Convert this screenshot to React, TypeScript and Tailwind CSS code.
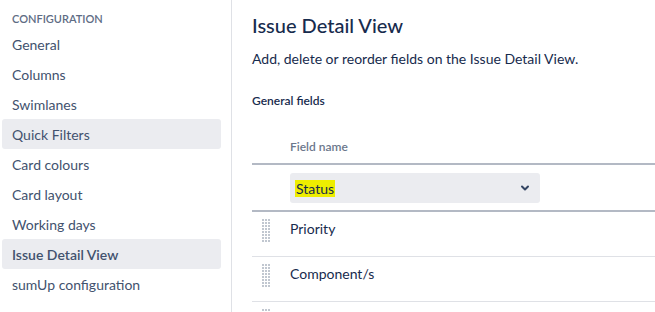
import React from 'react'

const navItems = [
  'General',
  'Columns',
  'Swimlanes',
  'Quick Filters',
  'Card colours',
  'Card layout',
  'Working days',
  'Issue Detail View',
  'sumUp configuration',
]

function DragHandle() {
  const dots = []
  for (let r = 0; r < 8; r++) {
    for (let c = 0; c < 3; c++) {
      dots.push(<rect key={`${r}-${c}`} x={c * 3} y={r * 3} width={2} height={2} fill="#c1c7d0" />)
    }
  }
  return (
    <svg width="8" height="23" viewBox="0 0 8 23" className="shrink-0">
      {dots}
    </svg>
  )
}

function FieldRow({ name }: { name?: string }) {
  return (
    <div className="flex h-[45px] border-b border-[#dfe1e6]">
      <div className="w-[38px] flex pl-[10px] pt-[7px]">
        <DragHandle />
      </div>
      {name && <div className="flex-1 pt-[6px] text-[14px] text-[#172b4d]">{name}</div>}
    </div>
  )
}

export default function App() {
  return (
    <div className="flex w-[655px] h-[312px] overflow-hidden bg-white" style={{ fontFamily: '"Segoe UI", Lato, "Noto Sans", sans-serif' }}>
      {/* Sidebar */}
      <div className="w-[232px] shrink-0 border-r border-[#dfe1e6] pt-[13px] pl-[2px] pr-[10px]">
        <div className="px-[10px] h-[16px] text-[11px] font-semibold uppercase text-[#5e6c84] leading-[12px]">Configuration</div>
        {navItems.map(item => {
          const active = item === 'Quick Filters' || item === 'Issue Detail View'
          return (
            <div
              key={item}
              className={`h-[30px] flex items-center px-[10px] rounded-[3px] text-[14px] text-[#42526e] ${active ? 'bg-[#ebecf0]' : ''} ${item === 'Issue Detail View' ? 'font-semibold' : ''}`}
            >
              {item}
            </div>
          )
        })}
      </div>

      {/* Main */}
      <div className="flex-1 pl-[20px] pt-[12px]">
        <h1 className="text-[20px] leading-[26px] font-medium text-[#172b4d]">Issue Detail View</h1>
        <p className="mt-[11px] text-[14px] leading-[20px] text-[#172b4d]">Add, delete or reorder fields on the Issue Detail View.</p>
        <h3 className="mt-[24px] text-[12px] leading-[16px] font-semibold text-[#172b4d]">General fields</h3>

        <div className="mt-[30px]">
          <div className="h-[26px] border-b-2 border-[#b3b9c4] pl-[38px] text-[12px] font-semibold text-[#6b778c] leading-[16px]">Field name</div>
          <div className="h-[47px] border-b-2 border-[#b3b9c4] pl-[38px] pt-[8px]">
            <div className="w-[250px] h-[30px] bg-[#ebecf0] rounded-[3px] flex items-center justify-between pl-[6px] pr-[9px]">
              <span className="text-[14px] text-[#172b4d] bg-[#eeee00] px-[1px] -ml-[1px] leading-[17px]">Status</span>
              <svg width="12" height="12" viewBox="0 0 24 24" className="text-[#344563]">
                <path d="M6 9l6 6 6-6" fill="none" stroke="currentColor" strokeWidth="4" strokeLinecap="round" strokeLinejoin="round" />
              </svg>
            </div>
          </div>
          <FieldRow name="Priority" />
          <FieldRow name="Component/s" />
          <FieldRow />
        </div>
      </div>
    </div>
  )
}
